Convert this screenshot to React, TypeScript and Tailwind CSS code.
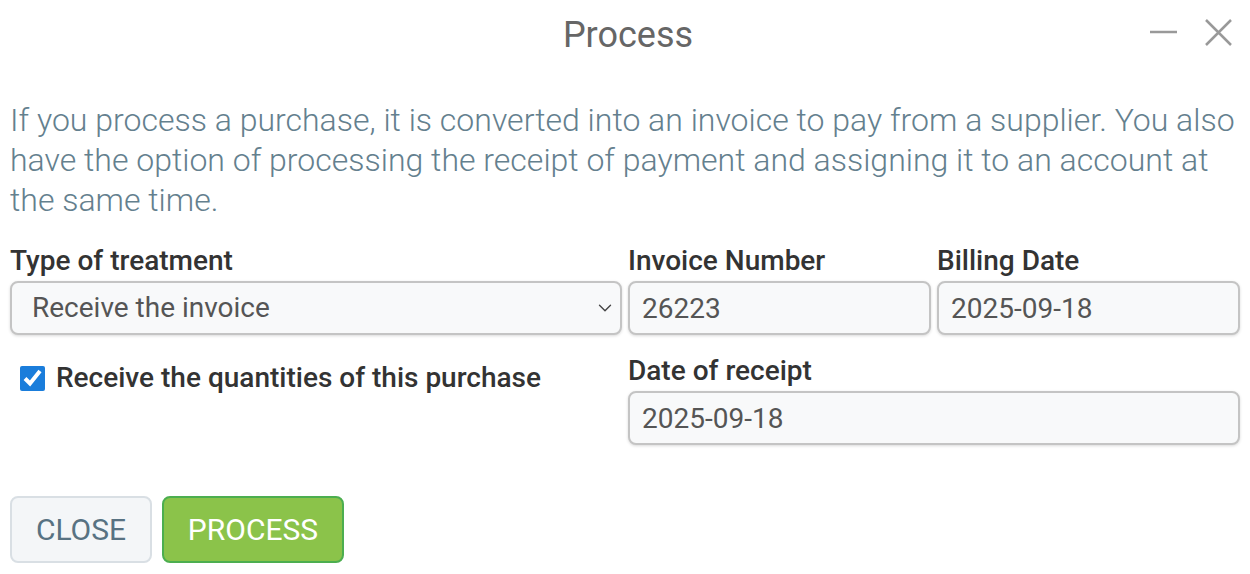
import { ChevronDown } from "lucide-react";

const inputCls =
	"h-[54px] w-full rounded-[8px] border-2 border-[#c4c4c4] bg-[#f8f9fa] px-[12px] text-[28px] text-[#555] shadow-[0_1px_3px_rgba(0,0,0,0.15)] outline-none";

const labelCls = "mb-[5px] h-[30px] text-[28px] leading-[30px] font-medium text-[#333]";

function Field({ label, value }: { label: string; value: string }) {
	return (
		<div className="flex flex-col">
			<label className={labelCls}>{label}</label>
			<input className={inputCls} defaultValue={value} />
		</div>
	);
}

export default function App() {
	return (
		<div className="h-[574px] w-[1250px] bg-white font-['Roboto',sans-serif]">
			<div className="relative flex h-[70px] items-center justify-center pl-[6px]">
				<h1 className="text-[36px] text-[#666]">Process</h1>
				<div className="absolute right-[18px] top-[19px] flex items-center gap-[28px]">
					<svg width="27" height="27" viewBox="0 0 27 27">
						<line x1="0" y1="13" x2="27" y2="13" stroke="#999" strokeWidth="2.5" />
					</svg>
					<svg width="27" height="27" viewBox="0 0 27 27">
						<path d="M1 1 L26 26 M26 1 L1 26" stroke="#999" strokeWidth="2.5" fill="none" />
					</svg>
				</div>
			</div>

			<div className="px-[10px]">
				<p className="mt-[30px] text-[32px] leading-[40px] font-light text-[#64808e]">
					If you process a purchase, it is converted into an invoice to pay from a supplier. You also
					have the option of processing the receipt of payment and assigning it to an account at the
					same time.
				</p>

				<div className="mt-[26px] grid grid-cols-4 gap-x-[6px] gap-y-[21px]">
					<div className="col-span-2 flex flex-col">
						<label className={labelCls}>Type of treatment</label>
						<div className="relative">
							<select
								className={inputCls + " appearance-none pl-[20px]"}
								defaultValue="invoice"
							>
								<option value="invoice">Receive the invoice</option>
							</select>
							<ChevronDown
								size={22}
								strokeWidth={1.5}
								className="pointer-events-none absolute right-[6px] top-[16px] text-[#444]"
							/>
						</div>
					</div>
					<Field label="Invoice Number" value="26223" />
					<Field label="Billing Date" value="2025-09-18" />

					<div className="col-span-2 pl-[10px] pt-[1px]">
						<label className="flex items-center gap-[11px] text-[28px] font-medium text-[#333]">
							<input
								type="checkbox"
								defaultChecked
								className="h-[25px] w-[25px] accent-[#1a7ddb]"
							/>
							Receive the quantities of this purchase
						</label>
					</div>
					<div className="col-span-2">
						<Field label="Date of receipt" value="2025-09-18" />
					</div>
				</div>

				<div className="mt-[51px] flex gap-[10px]">
					<button className="h-[67px] w-[142px] rounded-[8px] border-2 border-[#d9dfe4] bg-[#f4f6f8] text-[30px] text-[#587282]">
						CLOSE
					</button>
					<button className="h-[67px] w-[182px] rounded-[8px] border-2 border-[#4cae4f] bg-[#8bc34a] text-[30px] text-white">
						PROCESS
					</button>
				</div>
			</div>
		</div>
	);
}
